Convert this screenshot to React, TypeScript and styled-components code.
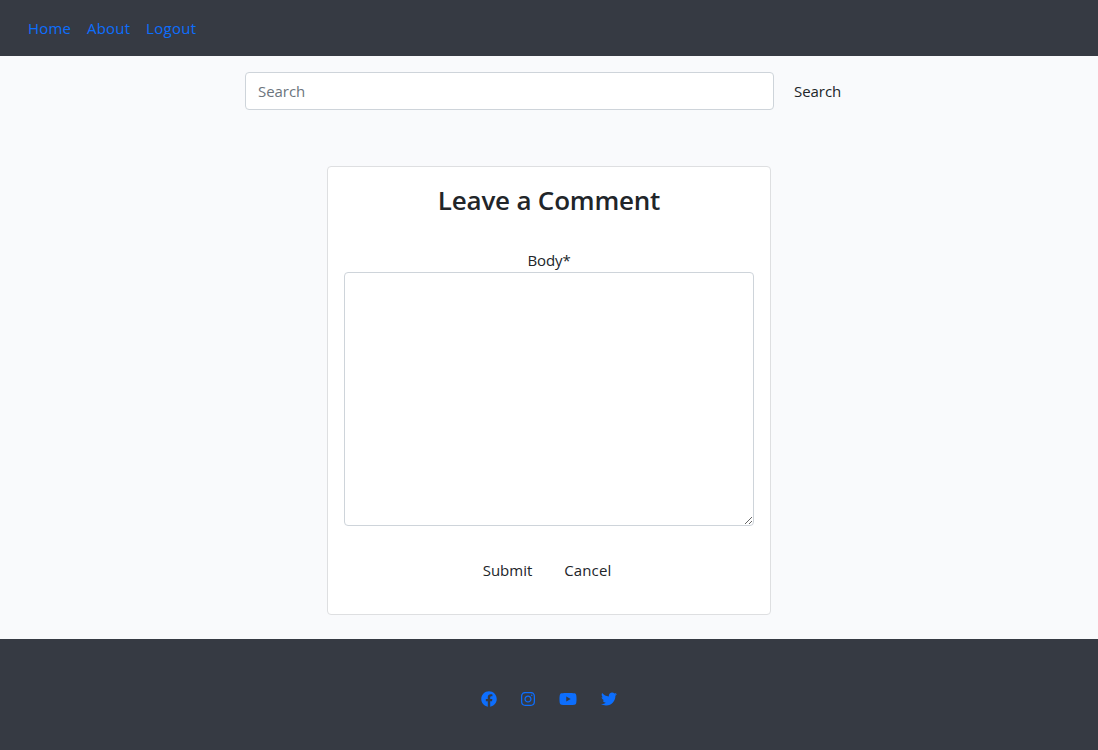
import React from "react";
import styled, { createGlobalStyle } from "styled-components";
import { FaFacebook, FaInstagram, FaYoutube, FaTwitter } from "react-icons/fa";

const GlobalStyle = createGlobalStyle`
  *, *::before, *::after { box-sizing: border-box; }
  body {
    margin: 0;
    background: #f9fafc;
    color: #212529;
    font-family: "Segoe UI", "Open Sans", "Noto Sans", sans-serif;
    font-size: 15px;
    line-height: 24px;
  }
`;

const Page = styled.div`
  display: flex;
  flex-direction: column;
  height: 750px;
`;

const Navbar = styled.nav`
  display: flex;
  align-items: center;
  gap: 16px;
  height: 56px;
  padding: 0 28px 1px;
  background: #363a43;
`;

const NavLink = styled.a<{ $width: number; $spacing?: number }>`
  width: ${(p) => p.$width}px;
  color: #0d6efd;
  letter-spacing: ${(p) => p.$spacing ?? 0}px;
  text-decoration: none;
  white-space: nowrap;
`;

const Main = styled.main`
  display: flex;
  flex: 1;
  flex-direction: column;
  align-items: center;
`;

const SearchForm = styled.form`
  display: flex;
  gap: 7px;
  width: 608px;
  margin-top: 16px;
`;

const SearchInput = styled.input`
  flex: none;
  width: 529px;
  height: 38px;
  padding: 5px 12px 6px;
  border: 1px solid #ced4da;
  border-radius: 4px;
  background: #fff;
  font: inherit;
  letter-spacing: -0.05px;

  &::placeholder {
    color: #6c757d;
    opacity: 1;
  }
`;

const Button = styled.button<{ $spacing?: number }>`
  height: 38px;
  padding: 5px 12px 6px;
  border: 1px solid transparent;
  border-radius: 4px;
  background: transparent;
  color: #212529;
  font: inherit;
  letter-spacing: ${(p) => p.$spacing ?? 0}px;
  white-space: nowrap;
`;

const Card = styled.section`
  display: flex;
  flex-direction: column;
  align-items: center;
  width: 444px;
  height: 449px;
  margin-top: 56px;
  padding: 16px;
  border: 1px solid #dedfe1;
  border-radius: 4px;
  background: #fff;
`;

const Title = styled.h2`
  margin: 0;
  font-size: 26px;
  font-weight: 600;
  line-height: 34px;
  letter-spacing: -0.2px;
`;

const Label = styled.label`
  margin-top: 32px;
  line-height: 23px;
  letter-spacing: -0.1px;
`;

const CommentBox = styled.textarea`
  display: block;
  flex: none;
  width: 410px;
  height: 254px;
  border: 1px solid #ced4da;
  border-radius: 4px;
  background: #fff;
  font: inherit;
  resize: vertical;
`;

const Actions = styled.div`
  display: flex;
  gap: 6px;
  margin: 25px 4px 0 0;
`;

const Footer = styled.footer`
  display: flex;
  align-items: center;
  justify-content: center;
  gap: 24px;
  height: 111px;
  padding-top: 9px;
  background: #363a43;
`;

const SocialLink = styled.a<{ $width: number }>`
  display: flex;
  color: #0d6efd;

  svg {
    width: ${(p) => p.$width}px;
    height: 16px;
  }
`;

export default function App() {
  return (
    <Page>
      <GlobalStyle />
      <Navbar>
        <NavLink $width={43} $spacing={0.2}>Home</NavLink>
        <NavLink $width={43} $spacing={0.2}>About</NavLink>
        <NavLink $width={51} $spacing={0.3}>Logout</NavLink>
      </Navbar>
      <Main>
        <SearchForm>
          <SearchInput placeholder="Search" aria-label="Search" />
          <Button type="button" $spacing={-0.05}>Search</Button>
        </SearchForm>
        <Card>
          <Title>Leave a Comment</Title>
          <Label htmlFor="body">Body*</Label>
          <CommentBox id="body" />
          <Actions>
            <Button type="button">Submit</Button>
            <Button type="button" $spacing={0.1}>Cancel</Button>
          </Actions>
        </Card>
      </Main>
      <Footer>
        <SocialLink $width={16} aria-label="Facebook"><FaFacebook /></SocialLink>
        <SocialLink $width={14} aria-label="Instagram"><FaInstagram /></SocialLink>
        <SocialLink $width={18} aria-label="YouTube"><FaYoutube /></SocialLink>
        <SocialLink $width={16} aria-label="Twitter"><FaTwitter /></SocialLink>
      </Footer>
    </Page>
  );
}
